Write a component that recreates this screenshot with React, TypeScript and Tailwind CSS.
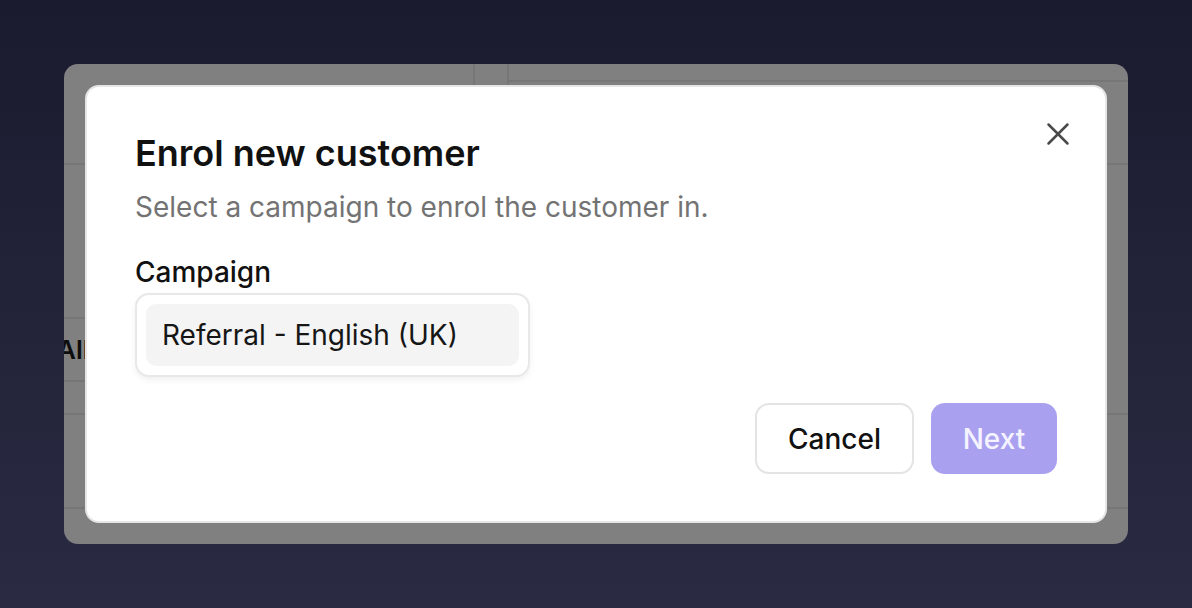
import { X } from 'lucide-react';

export default function App() {
  return (
    <div
      className="h-screen w-full bg-gradient-to-b from-[#1b1b2f] to-[#2a2a43] p-16"
      style={{ fontFamily: 'Inter, "Noto Sans", sans-serif' }}
    >
      {/* Dimmed app window behind the dialog */}
      <div className="relative h-full overflow-hidden rounded-[14px] bg-[#808080]">
        <div className="flex h-full flex-col">
          <div className="flex h-[101px] shrink-0 border-b-2 border-[#767676]">
            <div className="w-[409px]" />
            <div className="w-[36px] border-x-2 border-[#767676]" />
            <div className="flex-1">
              <div className="h-[18px] border-b-2 border-[#767676]" />
            </div>
          </div>
          <div className="h-[154px] shrink-0">
            <div className="h-full w-[300px] border-b-2 border-[#767676]" />
          </div>
          <div className="h-[63px] shrink-0">
            <div className="flex h-full w-[300px] items-center border-b-2 border-[#767676]">
              <span className="-ml-[7px] text-[26px] font-semibold text-[#0d0d0d]">All</span>
            </div>
          </div>
          <div className="h-[33px] shrink-0 border-b-2 border-[#767676]" />
          <div className="h-[94px] shrink-0 border-b-2 border-[#767676]" />
        </div>

        {/* Dialog */}
        <div className="absolute inset-[21px] z-10 flex flex-col rounded-[14px] border-2 border-[#e6e6e6] bg-white px-[48px] pb-[47px] pt-[45px]">
          <button className="absolute right-[28px] top-[28px] text-[#4a4a4a]">
            <X className="h-[38px] w-[38px]" strokeWidth={1.6} />
          </button>

          <h2 className="text-[36px] font-semibold leading-[42px] text-[#111111]">Enrol new customer</h2>
          <p className="mt-[16px] text-[28px] leading-[34px] text-[#737373]">
            Select a campaign to enrol the customer in.
          </p>

          <label className="mt-[31px] text-[28px] font-medium leading-[34px] text-[#111111]">Campaign</label>
          <div className="mt-[4px] w-[395px] rounded-[14px] border-2 border-[#e8e8e8] bg-white p-[9px] shadow-[0_3px_6px_rgba(0,0,0,0.06)]">
            <div className="flex h-[62px] items-center rounded-[10px] bg-[#f4f4f4] px-4 text-[28px] text-[#161616]">
              Referral - English (UK)
            </div>
          </div>

          <div className="mt-auto flex justify-end gap-[17px]">
            <button className="h-[71px] w-[159px] rounded-[14px] border-2 border-[#e4e4e4] bg-white text-[28px] font-medium text-[#111111]">
              Cancel
            </button>
            <button className="h-[71px] w-[126px] rounded-[14px] bg-[#a9a1f0] text-[28px] font-medium text-[#f4f3ff]">
              Next
            </button>
          </div>
        </div>
      </div>
    </div>
  );
}
